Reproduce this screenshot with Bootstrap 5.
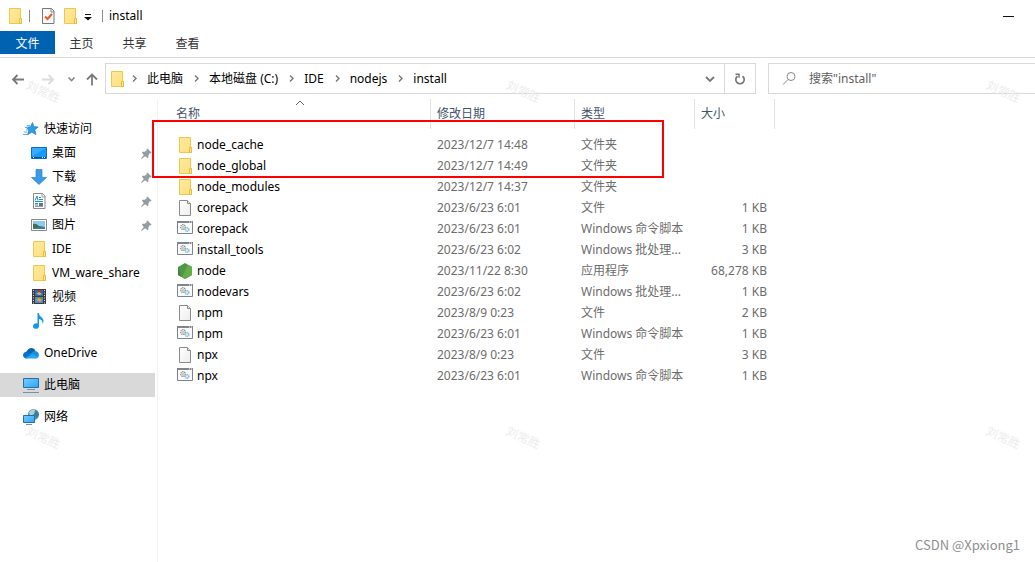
<!DOCTYPE html>
<html lang="zh-CN">
<head>
<meta charset="utf-8">
<meta name="viewport" content="width=device-width, initial-scale=1">
<title>install</title>
<link href="https://cdn.jsdelivr.net/npm/bootstrap@5.3.0/dist/css/bootstrap.min.css" rel="stylesheet">
<style>
body{font:12px/20px "Noto Sans","Noto Sans CJK SC",sans-serif;color:#000;background:#fff;overflow:hidden}
a{color:inherit;text-decoration:none}
svg{display:block;flex:none}
.ic{width:16px;height:16px}
.title-bar{height:31px;padding:0 21px 0 7px}
.quick-tools{gap:6px}
.bar-sep{width:1px;height:12px;background:#8c8c8c}
.plain-btn{border:0;background:none;padding:0;color:inherit}
.ribbon{height:27px;border-bottom:1px solid #d9d9d9}
.ribbon a{height:23px;line-height:25px;color:#333;width:53px;text-align:center}
.ribbon a.on{background:#0063b1;color:#fff;width:55px}
.addr-row{height:41px;padding-left:10px}
.nav-tools{width:95px;color:#6b6b6b}
.box{height:31px;border:1px solid #d9d9d9}
.crumbs{gap:9px;margin:0;padding:0;list-style:none;white-space:nowrap}
.crumbs li{display:flex;align-items:center;gap:8px}
.drop-btn{width:29px;height:29px;color:#666}
.reload{width:31px;height:29px;border-left:1px solid #d9d9d9;color:#666}
.search{width:267px;border-right:0;margin-left:12px;padding-left:12px}
.search input{border:0;outline:0;background:none;color:#5f5f5f;padding:0;width:100%}
.search input::placeholder{color:#5f5f5f;opacity:1}
.side{width:158px;padding:18px 2px 0 0;border-right:1px solid #f3f3f3}
.side ul{margin:0 0 8px}
.side a{display:flex;align-items:center;height:24px;gap:5px;padding-left:23px;line-height:24px}
.side .sub-item{padding-left:31px}
.side .on{background:#d9d9d9}
.side .pin{width:11px;height:11px;margin:0 3px 0 auto}
.files{width:617px;table-layout:fixed;border-collapse:separate;border-spacing:0}
.files th{height:30px;padding:0 6px;border-right:1px solid #e2e2e2;font-weight:400;color:#44546a;position:relative}
.files th:first-child{padding-left:18px}
.files .sort{position:absolute;left:50%;top:0}
.files tbody::before{content:"";display:block;height:5px}
.files td{height:21px;padding:0 6px;color:#6d6d6d;white-space:nowrap}
.files td:first-child{padding-left:19px;color:#000}
.files td:last-child{padding-right:8px;text-align:right}
.frame-note{position:absolute;left:-6px;top:21px;width:512px;height:58px;border:2px solid #f00}
.wm{position:absolute;color:#ececec;font-size:12px;line-height:18px;transform:rotate(24deg);pointer-events:none}
.wm.r1{top:83px}.wm.r2{top:429px}
.wm.c1{left:25px}.wm.c2{left:505px}.wm.c3{left:985px}
.credit{position:absolute;right:15px;bottom:7px;font:13px/20px "Noto Sans CJK SC",sans-serif;color:#8f8f8f}
</style>
</head>
<body class="d-flex flex-column vh-100 position-relative">
<svg width="0" height="0" class="position-absolute" aria-hidden="true">
<defs>
<linearGradient id="gy" x1="0" y1="0" x2="1" y2="1"><stop offset="0" stop-color="#ffe99f"/><stop offset="1" stop-color="#ffdf7c"/></linearGradient>
<linearGradient id="gb" x1="0" y1="0" x2="1" y2="1"><stop offset="0" stop-color="#7ccbff"/><stop offset="1" stop-color="#27a5fb"/></linearGradient>
<linearGradient id="gp" x1="0" y1="0" x2="1" y2="1"><stop offset="0" stop-color="#fff"/><stop offset="1" stop-color="#ececec"/></linearGradient>
</defs>
<symbol id="folder" viewBox="0 0 16 16"><path d="M2.500.5h11v10h1v5h-12z" fill="url(#gy)" stroke="#edc850"/><path d="M12.500 15.500v-5h2v5z" fill="#ffe591" stroke="#e6bd3e"/></symbol>
<symbol id="file" viewBox="0 0 16 16"><path d="M2.500.5h8l3 3v12h-11z" fill="url(#gp)" stroke="#8b8b8b"/><path d="M10.500.5v3h3" fill="#e8e8e8" stroke="#8b8b8b"/></symbol>
<symbol id="script" viewBox="0 0 16 16"><path d="M.5 1.500h15v11H.5z" fill="#fafafa" stroke="#7e858c"/><path d="M0 0h16v2H0z" fill="#7e858c"/><path d="M12 1h1M14 1h1" stroke="#fff"/><circle cx="6" cy="6" r="2.300" fill="#f2f2f2" stroke="#8a8a8a" stroke-width="1.300" stroke-dasharray="1.200 .6"/><circle cx="6" cy="6" r=".8" fill="#999"/><circle cx="10" cy="8.500" r="1.900" fill="#d7edf9" stroke="#7db3d3" stroke-width="1.300" stroke-dasharray="1.100 .5"/></symbol>
<symbol id="nodeapp" viewBox="0 0 16 16"><path d="M8 0l7 4v8l-7 4-7-4V4z" fill="#4d9845"/><path d="M11 1.700L15 4v8l-7 4-3-1.800z" fill="#66ad4a"/><path d="M1 4l3 9.700L1 12z" fill="#3b7e38"/></symbol>
<symbol id="star" viewBox="0 0 16 16"><path d="M9.500 1.500l1.400 4.200 4.300.3-3.400 2.800 1.200 4.700-4.200-2.300-4.200 2.600 1.200-4.700L3 6.300l4.500-.5z" fill="#2f9de4" stroke="#1681cb" stroke-width=".7"/><path d="M4 4.500h3M2 6.500h3M3 9h2M1 11h3M0 13.500h4" stroke="#63b5ec"/></symbol>
<symbol id="desk" viewBox="0 0 16 16"><path d="M.5 2.500h15v11H.5z" fill="#139cfa" stroke="#0870bf"/><path d="M1 3h14L1 11z" fill="#37adff"/><path d="M1 12.500h14" stroke="#064f8b"/><path d="M2 12.500h1M11 12.500h1M13 12.500h1" stroke="#fff"/></symbol>
<symbol id="down" viewBox="0 0 16 16"><path d="M5 .5h6v8h4.500L8 15.500.5 8.500H5z" fill="#3b99e8" stroke="#2885d8" stroke-width=".7"/></symbol>
<symbol id="doc" viewBox="0 0 16 16"><path d="M2.500.5h9l2.500 2.500v12.500H2.500z" fill="#fff" stroke="#8b8b8b"/><path d="M11 .5V4h3M4 13.500h8" fill="none" stroke="#999"/><path d="M8 4.500h2M8 6.500h4M4 8.500h8M4 10.500h3M4 12h3" stroke="#2692d5"/><path d="M4 7.500 6 3l1 4.500" fill="none" stroke="#2692d5"/><path d="M8 10h4v3H8z" fill="#537d91"/></symbol>
<symbol id="pic" viewBox="0 0 16 16"><path d="M.5 2.500h15v11H.5z" fill="#fff" stroke="#8b8b8b"/><path d="M2 4h12v8H2z" fill="#8ecbed"/><path d="M2 7q3-1 6 2l6 1v2H2z" fill="#3f7155"/><path d="M2 11l12-1v2H2z" fill="#397fae"/></symbol>
<symbol id="video" viewBox="0 0 16 16"><path d="M1 0h14v15H1z" fill="#3b3b3b"/><path d="M2.500 1v14M13.500 1v14" stroke="#ddd" stroke-dasharray="1 1.500"/><path d="M4 1h8v6H4z" fill="#3568bd"/><path d="M4 8h8v6H4z" fill="#5586d2"/><path d="M5 5l3-2 3 2-2 1z" fill="#e4b52b"/><path d="M7 1h3v2H7z" fill="#b33"/><path d="M5 11l3-2 3 2-2 2z" fill="#d5a83a"/><path d="M9 8h2v2H9z" fill="#57964b"/></symbol>
<symbol id="music" viewBox="0 0 16 16"><path d="M6.500 0H8c0 4 4.500 4 4.500 8 0 1-.5 2-1 2.500 0-3-1.500-4-3.500-4.500v7c0 4-6.500 3.500-6 0 .5-2.500 3-3 4.500-2.500z" fill="#1495ed"/></symbol>
<symbol id="cloud" viewBox="0 0 16 16"><path d="M3.500 7C5 2 11 1.500 12.500 6L8 10z" fill="#0864b8"/><path d="M3 13.500C-1 13-1 7 4 6.500l7 5z" fill="#0873cc"/><path d="M12 6c5 .3 5 7 1 7.500L6 10c2-1 3-4 6-4z" fill="#1490df"/><path d="M2 13l8-4 5 3q-1 1.500-3 1.500H3.500z" fill="#28a8ea"/></symbol>
<symbol id="pc" viewBox="0 0 16 16"><path d="M.5 1.500h15v9H.5z" fill="url(#gb)" stroke="#2b6f9f"/><path d="M4 12.500h8M0 15.500h16" stroke="#6b94b3"/></symbol>
<symbol id="net" viewBox="0 0 16 16"><circle cx="10.500" cy="5.500" r="5.500" fill="#5791a9"/><path d="M6 3q4-4 6-2l-1 4-4 2z" fill="#acd3dd"/><path d="M13 2l3 3-2 4-3-3z" fill="#357b9a"/><path d="M.5 6.500h11v7H.5z" fill="url(#gb)" stroke="#2b6f9f"/><path d="M3 15.500h6" stroke="#6b94b3"/></symbol>
<symbol id="pin" viewBox="0 0 12 12"><path d="M7 .5l4.500 4.500-1 1-1-.3L8 8v2.500l-1 .5L4.500 9 .5 12 0 11.500l3-4L1 5l.7-1H4l2.300-1.500L6 1.500z" fill="#929da5"/></symbol>
<symbol id="chev" viewBox="0 0 9 9"><path d="M3 1.500l3 3-3 3" fill="none" stroke="#777" stroke-width="1.400"/></symbol>
</svg>

<header>
<div class="title-bar d-flex align-items-center">
<div class="quick-tools d-flex align-items-center">
<svg class="ic"><use href="#folder"/></svg>
<span class="bar-sep me-1"></span>
<button class="plain-btn" aria-label="属性"><svg class="ic" viewBox="0 0 16 16"><path d="M2.500.5h9l2.500 2.500v12.500H2.500z" fill="#f8f8f8" stroke="#777"/><path d="M11 .5V4h3" fill="none" stroke="#888"/><path d="M5 8.500l2.500 2.500L12 6" fill="none" stroke="#e45b28" stroke-width="2"/></svg></button>
<button class="plain-btn" aria-label="新建文件夹"><svg class="ic"><use href="#folder"/></svg></button>
<button class="plain-btn" aria-label="自定义快速访问工具栏"><svg width="8" height="10" viewBox="0 0 8 10"><path d="M1 3.500h6" stroke="#111"/><path d="M0 6h8L4 9.500z" fill="#111"/></svg></button>
<span class="bar-sep ms-1"></span>
<span>install</span>
</div>
<button class="plain-btn ms-auto" aria-label="最小化"><svg width="11" height="10" viewBox="0 0 11 10"><path d="M0 5.500h11" stroke="#111"/></svg></button>
</div>
<nav class="ribbon d-flex"><a class="on" href="#">文件</a><a href="#">主页</a><a href="#">共享</a><a href="#">查看</a></nav>
<div class="addr-row d-flex align-items-center">
<div class="nav-tools d-flex align-items-center">
<button class="plain-btn" aria-label="后退"><svg class="ic" viewBox="0 0 16 16"><path d="M14 8.500H3M7.500 4L3 8.500 7.500 13" fill="none" stroke="#7a7a7a" stroke-width="1.800"/></svg></button>
<button class="plain-btn ms-3" aria-label="前进"><svg class="ic" viewBox="0 0 16 16"><path d="M0 8.500h11M6.500 4L11 8.500 6.500 13" fill="none" stroke="#dcdcdc" stroke-width="1.800"/></svg></button>
<button class="plain-btn ms-2" aria-label="历史"><svg width="10" height="10" viewBox="0 0 10 10"><path d="M2.500 3.500l3 3 3-3" fill="none" stroke="#888" stroke-width="1.600"/></svg></button>
<button class="plain-btn ms-2" aria-label="上移"><svg class="ic" viewBox="0 0 16 16"><path d="M8 14.500V3.500M3 8.500l5-5 5 5" fill="none" stroke="#7a7a7a" stroke-width="1.800"/></svg></button>
</div>
<div class="box d-flex align-items-center flex-grow-1">
<svg class="ic ms-1" viewBox="0 0 16 16"><use href="#folder" x="-1"/></svg>
<ol class="crumbs d-flex align-items-center ms-1 flex-grow-1">
<li><svg width="9" height="9"><use href="#chev"/></svg><a href="#">此电脑</a></li>
<li><svg width="9" height="9"><use href="#chev"/></svg><a href="#">本地磁盘 (C:)</a></li>
<li><svg width="9" height="9"><use href="#chev"/></svg><a href="#">IDE</a></li>
<li><svg width="9" height="9"><use href="#chev"/></svg><a href="#">nodejs</a></li>
<li><svg width="9" height="9"><use href="#chev"/></svg><a href="#">install</a></li>
</ol>
<button class="plain-btn drop-btn d-flex align-items-center justify-content-center" aria-label="展开"><svg width="10" height="10" viewBox="0 0 10 10"><path d="M1 3l4 4 4-4" fill="none" stroke="#777" stroke-width="1.800"/></svg></button>
<button class="plain-btn reload d-flex align-items-center justify-content-center" aria-label="刷新"><svg width="12" height="12" viewBox="0 0 12 12"><path d="M8.500 3.200A4.200 4.200 0 1 1 3.500 3.200" fill="none" stroke="#777" stroke-width="1.700"/><path d="M1.500 1.200H5v3.500" fill="none" stroke="#777" stroke-width="1.500"/></svg></button>
</div>
<label class="box search d-flex align-items-center"><svg class="ic" viewBox="0 0 16 16"><circle cx="10" cy="5.500" r="4" fill="none" stroke="#888"/><path d="M7 8.500L2 13.500" stroke="#888"/></svg><input class="ms-2 ps-1" type="search" placeholder='搜索"install"' aria-label="搜索"></label>
</div>
</header>

<div class="d-flex flex-grow-1">
<nav class="side flex-shrink-0">
<ul class="list-unstyled">
<li><a href="#"><svg class="ic"><use href="#star"/></svg>快速访问</a></li>
<li><a class="sub-item" href="#"><svg class="ic"><use href="#desk"/></svg>桌面<svg class="pin"><use href="#pin"/></svg></a></li>
<li><a class="sub-item" href="#"><svg class="ic"><use href="#down"/></svg>下载<svg class="pin"><use href="#pin"/></svg></a></li>
<li><a class="sub-item" href="#"><svg class="ic"><use href="#doc"/></svg>文档<svg class="pin"><use href="#pin"/></svg></a></li>
<li><a class="sub-item" href="#"><svg class="ic"><use href="#pic"/></svg>图片<svg class="pin"><use href="#pin"/></svg></a></li>
<li><a class="sub-item" href="#"><svg class="ic"><use href="#folder"/></svg>IDE</a></li>
<li><a class="sub-item" href="#"><svg class="ic"><use href="#folder"/></svg>VM_ware_share</a></li>
<li><a class="sub-item" href="#"><svg class="ic"><use href="#video"/></svg>视频</a></li>
<li><a class="sub-item" href="#"><svg class="ic"><use href="#music"/></svg>音乐</a></li>
</ul>
<ul class="list-unstyled"><li><a href="#"><svg class="ic"><use href="#cloud"/></svg>OneDrive</a></li></ul>
<ul class="list-unstyled"><li><a class="on" href="#"><svg class="ic"><use href="#pc"/></svg>此电脑</a></li></ul>
<ul class="list-unstyled"><li><a href="#"><svg class="ic"><use href="#net"/></svg>网络</a></li></ul>
</nav>
<main class="position-relative flex-grow-1">
<table class="files">
<colgroup><col style="width:273px"><col style="width:144px"><col style="width:120px"><col style="width:80px"></colgroup>
<thead><tr><th>名称<svg class="sort" width="11" height="8" viewBox="0 0 11 8"><path d="M2 6l4-4 4 4" fill="none" stroke="#666"/></svg></th><th>修改日期</th><th>类型</th><th>大小</th></tr></thead>
<tbody>
<tr><td><div class="d-flex align-items-center gap-1"><svg class="ic"><use href="#folder"/></svg>node_cache</div></td><td>2023/12/7 14:48</td><td>文件夹</td><td></td></tr>
<tr><td><div class="d-flex align-items-center gap-1"><svg class="ic"><use href="#folder"/></svg>node_global</div></td><td>2023/12/7 14:49</td><td>文件夹</td><td></td></tr>
<tr><td><div class="d-flex align-items-center gap-1"><svg class="ic"><use href="#folder"/></svg>node_modules</div></td><td>2023/12/7 14:37</td><td>文件夹</td><td></td></tr>
<tr><td><div class="d-flex align-items-center gap-1"><svg class="ic"><use href="#file"/></svg>corepack</div></td><td>2023/6/23 6:01</td><td>文件</td><td>1 KB</td></tr>
<tr><td><div class="d-flex align-items-center gap-1"><svg class="ic"><use href="#script"/></svg>corepack</div></td><td>2023/6/23 6:01</td><td>Windows 命令脚本</td><td>1 KB</td></tr>
<tr><td><div class="d-flex align-items-center gap-1"><svg class="ic"><use href="#script"/></svg>install_tools</div></td><td>2023/6/23 6:02</td><td>Windows 批处理...</td><td>3 KB</td></tr>
<tr><td><div class="d-flex align-items-center gap-1"><svg class="ic"><use href="#nodeapp"/></svg>node</div></td><td>2023/11/22 8:30</td><td>应用程序</td><td>68,278 KB</td></tr>
<tr><td><div class="d-flex align-items-center gap-1"><svg class="ic"><use href="#script"/></svg>nodevars</div></td><td>2023/6/23 6:02</td><td>Windows 批处理...</td><td>1 KB</td></tr>
<tr><td><div class="d-flex align-items-center gap-1"><svg class="ic"><use href="#file"/></svg>npm</div></td><td>2023/8/9 0:23</td><td>文件</td><td>2 KB</td></tr>
<tr><td><div class="d-flex align-items-center gap-1"><svg class="ic"><use href="#script"/></svg>npm</div></td><td>2023/6/23 6:01</td><td>Windows 命令脚本</td><td>1 KB</td></tr>
<tr><td><div class="d-flex align-items-center gap-1"><svg class="ic"><use href="#file"/></svg>npx</div></td><td>2023/8/9 0:23</td><td>文件</td><td>3 KB</td></tr>
<tr><td><div class="d-flex align-items-center gap-1"><svg class="ic"><use href="#script"/></svg>npx</div></td><td>2023/6/23 6:01</td><td>Windows 命令脚本</td><td>1 KB</td></tr>
</tbody>
</table>
<div class="frame-note"></div>
</main>
</div>

<span class="wm r1 c1">刘常胜</span><span class="wm r1 c2">刘常胜</span><span class="wm r1 c3">刘常胜</span>
<span class="wm r2 c1">刘常胜</span><span class="wm r2 c2">刘常胜</span><span class="wm r2 c3">刘常胜</span>
<span class="credit">CSDN @Xpxiong1</span>
<script src="https://cdn.jsdelivr.net/npm/bootstrap@5.3.0/dist/js/bootstrap.bundle.min.js"></script>
</body>
</html>
